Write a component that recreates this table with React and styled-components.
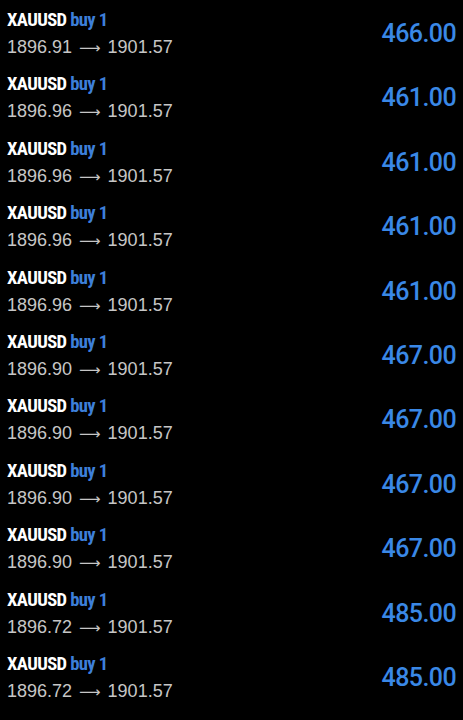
import React from "react";
import styled, { createGlobalStyle } from "styled-components";

const trades = [
  { open: "1896.91", close: "1901.57", profit: "466.00" },
  { open: "1896.96", close: "1901.57", profit: "461.00" },
  { open: "1896.96", close: "1901.57", profit: "461.00" },
  { open: "1896.96", close: "1901.57", profit: "461.00" },
  { open: "1896.96", close: "1901.57", profit: "461.00" },
  { open: "1896.90", close: "1901.57", profit: "467.00" },
  { open: "1896.90", close: "1901.57", profit: "467.00" },
  { open: "1896.90", close: "1901.57", profit: "467.00" },
  { open: "1896.90", close: "1901.57", profit: "467.00" },
  { open: "1896.72", close: "1901.57", profit: "485.00" },
  { open: "1896.72", close: "1901.57", profit: "485.00" },
];

export default function App() {
  return (
    <>
      <GlobalStyle />
      <List>
        {trades.map((t, i) => (
          <Row key={i}>
            <Info>
              <Title>
                XAUUSD <Side>buy 1</Side>
              </Title>
              <Prices>
                {t.open}
                <Arrow>⟶</Arrow>
                {t.close}
              </Prices>
            </Info>
            <Profit>{t.profit}</Profit>
          </Row>
        ))}
      </List>
    </>
  );
}

const GlobalStyle = createGlobalStyle`
  html, body {
    margin: 0;
    padding: 0;
    background: #000;
  }
  body {
    font-family: "Liberation Sans", Arial, sans-serif;
  }
`;

const List = styled.div`
  width: 463px;
  height: 720px;
  overflow: hidden;
  background: #000;
`;

const Row = styled.div`
  display: flex;
  justify-content: space-between;
  align-items: flex-start;
  height: 64.4px;
  padding: 9px 7px 0 7px;
  box-sizing: border-box;
`;

const Info = styled.div`
  display: flex;
  flex-direction: column;
`;

const Title = styled.div`
  font-family: "Roboto Condensed", Roboto, sans-serif;
  font-weight: 700;
  font-size: 18.6px;
  line-height: 22px;
  letter-spacing: -0.6px;
  color: #fff;
`;

const Side = styled.span`
  color: #3d7fd9;
`;

const Prices = styled.div`
  margin-top: 5px;
  font-family: "Liberation Sans", Arial, sans-serif;
  font-size: 18px;
  line-height: 22px;
  color: #c6c6c6;
`;

const Arrow = styled.span`
  display: inline-block;
  font-family: "DejaVu Sans", sans-serif;
  font-size: 15px;
  margin: 0 7px;
`;

const Profit = styled.div`
  margin-top: 10px;
  font-family: Roboto, sans-serif;
  font-weight: 500;
  font-size: 25px;
  line-height: 30px;
  letter-spacing: -0.6px;
  color: #3a88e6;
`;
